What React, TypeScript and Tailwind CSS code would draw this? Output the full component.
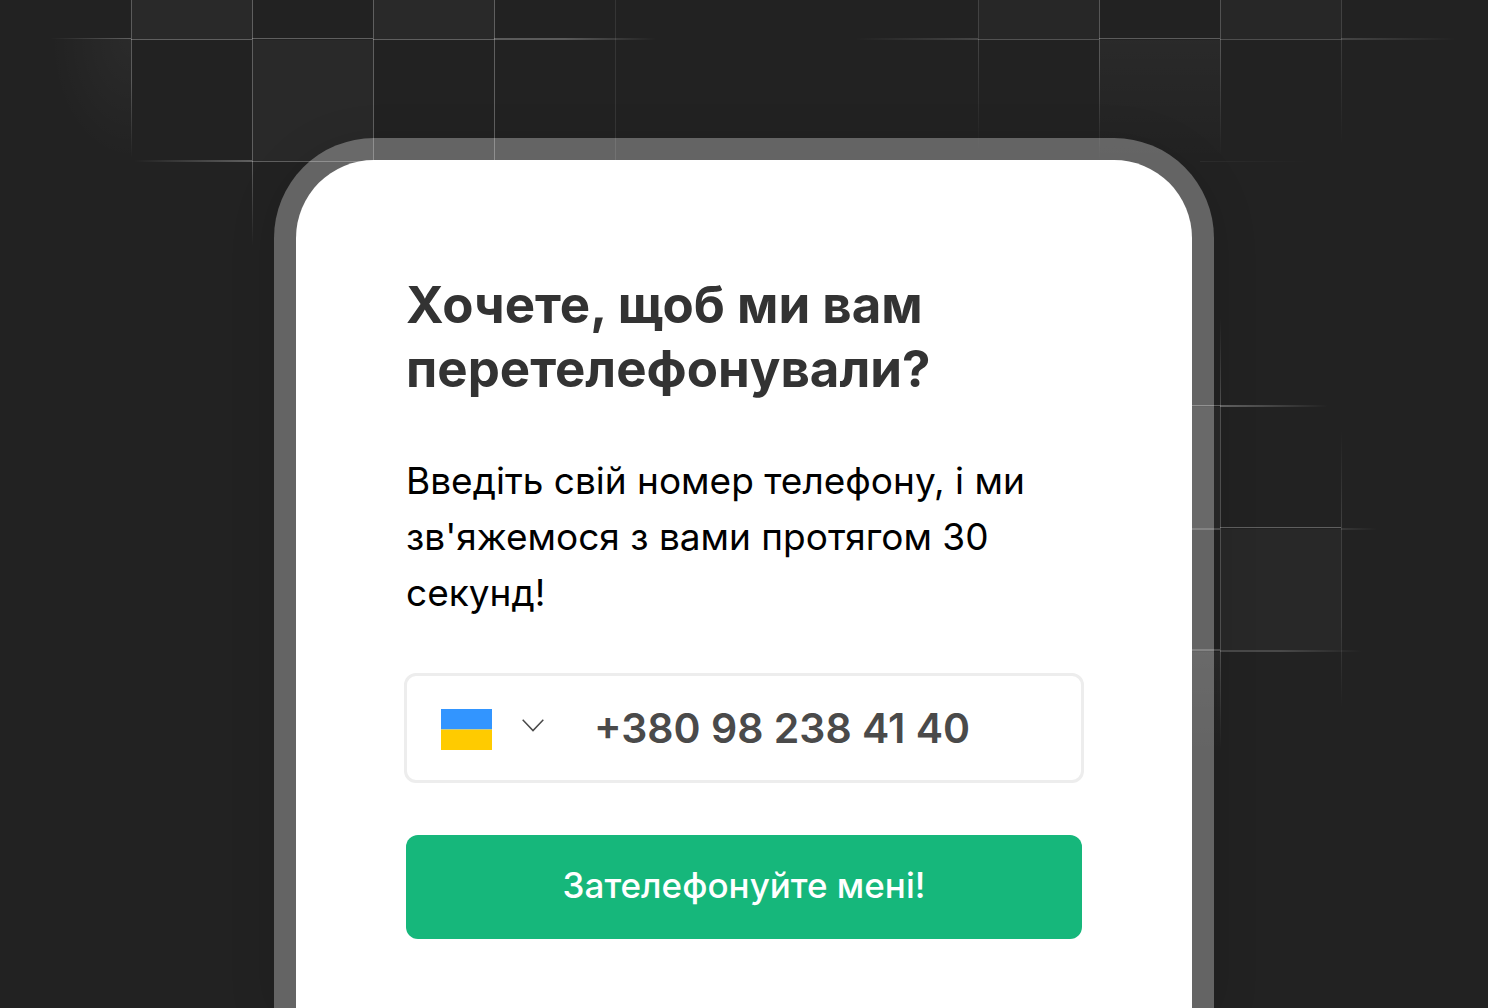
type Fade = 'fadeUp' | 'fadeDown' | 'fadeLeft' | 'fadeRight' | 'glow' | 'solid'

type Block = {
  x: number
  y: number
  w: number
  h: number
  fade: Fade
  opacity: number
}

const TILES: Block[] = [
  { x: 132, y: 0, w: 120, h: 39, fade: 'solid', opacity: 0.035 },
  { x: 374, y: 0, w: 120, h: 39, fade: 'solid', opacity: 0.035 },
  { x: 253, y: 40, w: 120, h: 121, fade: 'solid', opacity: 0.035 },
  { x: 50, y: 39, w: 81, h: 121, fade: 'glow', opacity: 0.04 },
  { x: 979, y: 0, w: 120, h: 39, fade: 'solid', opacity: 0.025 },
  { x: 1221, y: 0, w: 120, h: 39, fade: 'solid', opacity: 0.022 },
  { x: 1100, y: 40, w: 120, h: 121, fade: 'fadeDown', opacity: 0.035 },
  { x: 1192, y: 407, w: 28, h: 121, fade: 'solid', opacity: 0.035 },
  { x: 1221, y: 529, w: 120, h: 121, fade: 'solid', opacity: 0.03 },
  { x: 1192, y: 652, w: 28, h: 100, fade: 'fadeDown', opacity: 0.035 },
]

const LINES: Block[] = [
  // left grid
  { x: 131, y: 0, w: 1, h: 80, fade: 'solid', opacity: 0.26 },
  { x: 131, y: 80, w: 1, h: 78, fade: 'fadeDown', opacity: 0.26 },
  { x: 252, y: 0, w: 1, h: 161, fade: 'solid', opacity: 0.28 },
  { x: 252, y: 161, w: 1, h: 85, fade: 'fadeDown', opacity: 0.28 },
  { x: 373, y: 0, w: 1, h: 200, fade: 'solid', opacity: 0.28 },
  { x: 494, y: 0, w: 1, h: 200, fade: 'solid', opacity: 0.28 },
  { x: 615, y: 0, w: 1, h: 160, fade: 'solid', opacity: 0.09 },
  { x: 50, y: 38, w: 81, h: 1, fade: 'fadeLeft', opacity: 0.28 },
  { x: 131, y: 39, w: 121, h: 1, fade: 'solid', opacity: 0.28 },
  { x: 252, y: 38, w: 121, h: 1, fade: 'solid', opacity: 0.28 },
  { x: 373, y: 39, w: 121, h: 1, fade: 'solid', opacity: 0.28 },
  { x: 494, y: 38, w: 70, h: 2, fade: 'solid', opacity: 0.26 },
  { x: 564, y: 38, w: 92, h: 2, fade: 'fadeRight', opacity: 0.26 },
  { x: 134, y: 160, w: 118, h: 2, fade: 'fadeLeft', opacity: 0.28 },
  { x: 252, y: 161, w: 121, h: 1, fade: 'solid', opacity: 0.28 },
  // right grid
  { x: 978, y: 0, w: 1, h: 40, fade: 'solid', opacity: 0.15 },
  { x: 978, y: 40, w: 1, h: 110, fade: 'fadeDown', opacity: 0.15 },
  { x: 1099, y: 0, w: 1, h: 60, fade: 'solid', opacity: 0.24 },
  { x: 1099, y: 60, w: 1, h: 100, fade: 'fadeDown', opacity: 0.24 },
  { x: 1220, y: 0, w: 1, h: 50, fade: 'solid', opacity: 0.22 },
  { x: 1220, y: 50, w: 1, h: 105, fade: 'fadeDown', opacity: 0.22 },
  { x: 1341, y: 0, w: 1, h: 40, fade: 'solid', opacity: 0.14 },
  { x: 1341, y: 40, w: 1, h: 104, fade: 'fadeDown', opacity: 0.12 },
  { x: 855, y: 38, w: 123, h: 2, fade: 'fadeLeft', opacity: 0.16 },
  { x: 978, y: 39, w: 121, h: 1, fade: 'solid', opacity: 0.22 },
  { x: 1099, y: 38, w: 121, h: 1, fade: 'solid', opacity: 0.26 },
  { x: 1220, y: 39, w: 121, h: 1, fade: 'solid', opacity: 0.2 },
  { x: 1341, y: 38, w: 115, h: 2, fade: 'fadeRight', opacity: 0.16 },
  { x: 1200, y: 161, w: 110, h: 1, fade: 'fadeRight', opacity: 0.05 },
  // lower right grid
  { x: 1220, y: 318, w: 1, h: 88, fade: 'fadeUp', opacity: 0.22 },
  { x: 1220, y: 406, w: 1, h: 245, fade: 'solid', opacity: 0.22 },
  { x: 1220, y: 651, w: 1, h: 98, fade: 'fadeDown', opacity: 0.22 },
  { x: 1341, y: 430, w: 1, h: 98, fade: 'fadeUp', opacity: 0.14 },
  { x: 1341, y: 528, w: 1, h: 100, fade: 'solid', opacity: 0.13 },
  { x: 1341, y: 628, w: 1, h: 80, fade: 'fadeDown', opacity: 0.12 },
  { x: 1192, y: 405, w: 28, h: 1, fade: 'solid', opacity: 0.3 },
  { x: 1220, y: 405, w: 108, h: 2, fade: 'fadeRight', opacity: 0.3 },
  { x: 1192, y: 528, w: 28, h: 2, fade: 'solid', opacity: 0.2 },
  { x: 1220, y: 527, w: 121, h: 1, fade: 'solid', opacity: 0.28 },
  { x: 1341, y: 528, w: 36, h: 2, fade: 'fadeRight', opacity: 0.1 },
  { x: 1192, y: 649, w: 28, h: 2, fade: 'solid', opacity: 0.2 },
  { x: 1220, y: 650, w: 60, h: 2, fade: 'solid', opacity: 0.18 },
  { x: 1280, y: 650, w: 82, h: 2, fade: 'fadeRight', opacity: 0.18 },
]

const GRADIENTS = [
  { id: 'fadeRight', x1: 0, y1: 0, x2: 1, y2: 0 },
  { id: 'fadeLeft', x1: 1, y1: 0, x2: 0, y2: 0 },
  { id: 'fadeDown', x1: 0, y1: 0, x2: 0, y2: 1 },
  { id: 'fadeUp', x1: 0, y1: 1, x2: 0, y2: 0 },
]

const GridBackdrop = () => (
  <svg
    aria-hidden="true"
    viewBox="0 0 1488 1008"
    preserveAspectRatio="xMidYMin slice"
    className="absolute inset-0 h-full w-full"
  >
    <defs>
      {GRADIENTS.map(({ id, x1, y1, x2, y2 }) => (
        <linearGradient key={id} id={id} x1={x1} y1={y1} x2={x2} y2={y2}>
          <stop offset="0" stopColor="#fff" />
          <stop offset="1" stopColor="#fff" stopOpacity="0" />
        </linearGradient>
      ))}
      <radialGradient id="glow" cx="1" cy="0" r="1">
        <stop offset="0" stopColor="#fff" />
        <stop offset="1" stopColor="#fff" stopOpacity="0" />
      </radialGradient>
    </defs>
    {[...TILES, ...LINES].map(({ x, y, w, h, fade, opacity }, i) => (
      <rect
        key={i}
        x={x}
        y={y}
        width={w}
        height={h}
        fill={fade === 'solid' ? '#fff' : `url(#${fade})`}
        opacity={opacity}
      />
    ))}
  </svg>
)

const UkraineFlag = () => (
  <svg width="51" height="41" viewBox="0 0 51 41" aria-hidden="true">
    <rect width="51" height="20.5" fill="#3295ff" />
    <rect y="20.5" width="51" height="20.5" fill="#ffcb00" />
  </svg>
)

const Chevron = () => (
  <svg width="22" height="13" viewBox="0 0 22 13" fill="none" stroke="#4a4a4a" strokeWidth="1.5" aria-hidden="true">
    <path d="M0.7 0.7L11 11.6L21.3 0.7" />
  </svg>
)

const CallbackForm = () => (
  <form className="flex flex-col" onSubmit={(e) => e.preventDefault()}>
    <div className="px-0.5">
      <h1 className="text-[51px] leading-[64px] font-bold text-[#333333]">
        Хочете, щоб ми вам перетелефонували?
      </h1>
      <p className="mt-[52px] text-[37px] leading-[56px] text-black">
        Введіть свій номер телефону, і ми зв'яжемося з вами протягом 30 секунд!
      </p>
    </div>

    <div className="mt-[52px] flex h-[110px] items-center rounded-xl border-3 border-[#ededed] bg-white pt-0.5 pl-[34px]">
      <button type="button" aria-label="Україна" className="flex shrink-0 items-center gap-[30px]">
        <UkraineFlag />
        <span className="pb-2">
          <Chevron />
        </span>
      </button>
      <input
        type="tel"
        aria-label="Номер телефону"
        defaultValue="+380 98 238 41 40"
        className="ml-[50px] min-w-0 flex-1 bg-transparent text-[41px] font-semibold text-[#4a4a4a] outline-none"
      />
    </div>

    <div className="mt-[52px] flex px-0.5">
      <button type="submit" className="h-[104px] flex-1 rounded-xl bg-[#16b77b] pb-1 text-[35px] font-medium text-white">
        Зателефонуйте мені!
      </button>
    </div>
  </form>
)

const App = () => {
  return (
    <main className="relative flex min-h-screen flex-col items-center overflow-hidden bg-[#222222] pt-[138px] font-['Inter',sans-serif]">
      <GridBackdrop />
      <div className="relative flex w-full max-w-[940px] flex-1 flex-col rounded-t-[100px] bg-white/30 px-[22px] pt-[22px] shadow-[0_8px_48px_rgba(0,0,0,0.12)]">
        <div className="flex-1 rounded-t-[78px] bg-white px-[108px] pt-[113px] pb-[68px]">
          <CallbackForm />
        </div>
      </div>
    </main>
  )
}

export default App
